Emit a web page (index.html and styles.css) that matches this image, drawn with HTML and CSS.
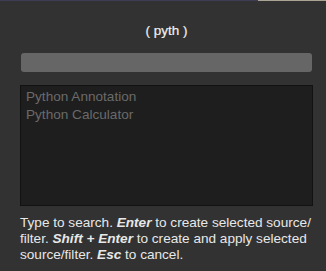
FILE: index.html
```html
<!DOCTYPE html>
<html>
<head>
<meta charset="utf-8">
<link rel="stylesheet" href="styles.css">
</head>
<body>
<div class="topline"><div class="topline-a"></div><div class="topline-b"></div></div>
<div class="dialog">
  <div class="title">( pyth )</div>
  <div class="search"></div>
  <div class="list">
    <div class="item">Python Annotation</div>
    <div class="item">Python Calculator</div>
  </div>
  <p class="help">Type to search. <b>Enter</b> to create selected source/ filter. <b>Shift + Enter</b> to create and apply selected source/filter. <b>Esc</b> to cancel.</p>
</div>
</body>
</html>
```
FILE: styles.css
```css
html, body {
  margin: 0;
  padding: 0;
  background: #323232;
  width: 326px;
  height: 271px;
  overflow: hidden;
  font-family: "Liberation Sans", Arial, sans-serif;
}
.topline {
  display: flex;
  height: 1px;
}
.topline-a { flex: 0 0 258px; background: #3c3c55; }
.topline-b { flex: 1; background: #a9a493; }
.dialog {
  display: flex;
  flex-direction: column;
  padding: 0 13px 0 20px;
}
.title {
  text-align: center;
  color: #f0f0f0;
  font-size: 13.5px;
  margin-top: 22px;
  height: 16px;
  line-height: 16px;
  -webkit-text-stroke: 0.2px #f0f0f0;
}
.search {
  margin: 14px 1px 0 1px;
  height: 19px;
  background: #666666;
  border-radius: 3px;
}
.list {
  margin-top: 13px;
  height: 115px;
  background: #1e1e1e;
  border: 1px solid #121212;
  padding: 2px 5px;
}
.item {
  color: #6a6a6a;
  font-size: 13.6px;
  line-height: 18px;
}
.help {
  margin: 9px 0 0 0;
  color: #e8e8e8;
  font-size: 13.6px;
  line-height: 16px;
}
.help b {
  font-style: italic;
  font-weight: bold;
}
```
